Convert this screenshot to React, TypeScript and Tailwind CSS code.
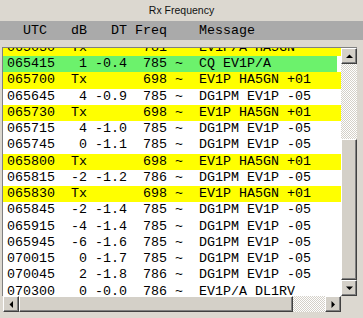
import React from 'react';

type Row = { text: string; color: 'yellow' | 'green' | 'white' };

const rows: Row[] = [
  { text: '065030  Tx       781 ~  EV1P/A HA5GN', color: 'yellow' },
  { text: '065415   1 -0.4  785 ~  CQ EV1P/A', color: 'green' },
  { text: '065700  Tx       698 ~  EV1P HA5GN +01', color: 'yellow' },
  { text: '065645   4 -0.9  785 ~  DG1PM EV1P -05', color: 'white' },
  { text: '065730  Tx       698 ~  EV1P HA5GN +01', color: 'yellow' },
  { text: '065715   4 -1.0  785 ~  DG1PM EV1P -05', color: 'white' },
  { text: '065745   0 -1.1  785 ~  DG1PM EV1P -05', color: 'white' },
  { text: '065800  Tx       698 ~  EV1P HA5GN +01', color: 'yellow' },
  { text: '065815  -2 -1.2  786 ~  DG1PM EV1P -05', color: 'white' },
  { text: '065830  Tx       698 ~  EV1P HA5GN +01', color: 'yellow' },
  { text: '065845  -2 -1.4  785 ~  DG1PM EV1P -05', color: 'white' },
  { text: '065915  -4 -1.4  785 ~  DG1PM EV1P -05', color: 'white' },
  { text: '065945  -6 -1.6  785 ~  DG1PM EV1P -05', color: 'white' },
  { text: '070015   0 -1.7  785 ~  DG1PM EV1P -05', color: 'white' },
  { text: '070045   2 -1.8  786 ~  DG1PM EV1P -05', color: 'white' },
  { text: '070300   0 -0.0  786 ~  EV1P/A DL1RV', color: 'white' },
];

const mono = "font-['Liberation_Mono','Courier_New',monospace] text-[13.33px]";

function Arrow({ dir }: { dir: 'up' | 'down' | 'left' | 'right' }) {
  const pts = {
    up: '0,4 7,4 3.5,0.5',
    down: '0,0.5 7,0.5 3.5,4',
    left: '4,0 4,7 0.5,3.5',
    right: '0.5,0 0.5,7 4,3.5',
  }[dir];
  const vertical = dir === 'up' || dir === 'down';
  return (
    <svg width={vertical ? 7 : 5} height={vertical ? 5 : 7} viewBox={vertical ? '0 0 7 5' : '0 0 5 7'}>
      <polygon points={pts} fill="#000" />
    </svg>
  );
}

function Btn({ dir }: { dir: 'up' | 'down' | 'left' | 'right' }) {
  return (
    <div className="w-[16px] h-[16px] shrink-0 bg-[#d4d0c8] border border-t-white border-l-white border-r-[#404040] border-b-[#404040] shadow-[inset_-1px_-1px_0_#808080] flex items-center justify-center">
      <Arrow dir={dir} />
    </div>
  );
}

const track = 'bg-[repeating-conic-gradient(#d4d0c8_0_25%,#ffffff_0_50%)] bg-[length:2px_2px]';

export default function App() {
  return (
    <div className="w-[363px] h-[318px] bg-[#dcd8d0] flex flex-col overflow-hidden">
      <div className="h-[21px] flex items-center justify-center text-[10.5px] text-[#111] font-['Liberation_Sans',Arial,sans-serif]">
        Rx Frequency
      </div>
      <div className={`h-[19px] bg-[#aaaaaa] flex items-center pl-[7px] text-black whitespace-pre ${mono}`}>
        {'  UTC   dB   DT Freq    Message'}
      </div>
      <div className="h-[7px]" />
      <div className="flex ml-[2px] mr-[6px] h-[249px] border-l border-t border-[#808080]">
        <div className="flex-1 bg-white overflow-hidden">
          <div className="-mt-[8.25px]">
            {rows.map((r, i) => (
              <div
                key={i}
                className={`h-[16.25px] leading-[16.25px] pl-[4px] whitespace-pre text-black ${mono} ${
                  r.color === 'yellow' ? 'bg-[#ffff00]' : r.color === 'green' ? 'bg-[#6cf26c] mr-[4px]' : 'bg-white'
                }`}
              >
                {r.text}
              </div>
            ))}
          </div>
        </div>
        <div className="w-[16px] flex flex-col">
          <Btn dir="up" />
          <div className={`h-[75px] ${track}`} />
          <div className="flex-1 bg-[#d4d0c8] border border-t-white border-l-white border-r-[#404040] border-b-[#404040] shadow-[inset_-1px_-1px_0_#808080]" />
          <Btn dir="down" />
        </div>
      </div>
      <div className="flex ml-[3px] mr-[6px] h-[16px]">
        <Btn dir="left" />
        <div className="w-[274px] bg-[#d4d0c8] border border-t-white border-l-white border-r-[#404040] border-b-[#404040] shadow-[inset_-1px_-1px_0_#808080]" />
        <div className={`flex-1 ${track}`} />
        <Btn dir="right" />
        <div className="w-[16px] bg-[#dcd8d0]" />
      </div>
    </div>
  );
}
